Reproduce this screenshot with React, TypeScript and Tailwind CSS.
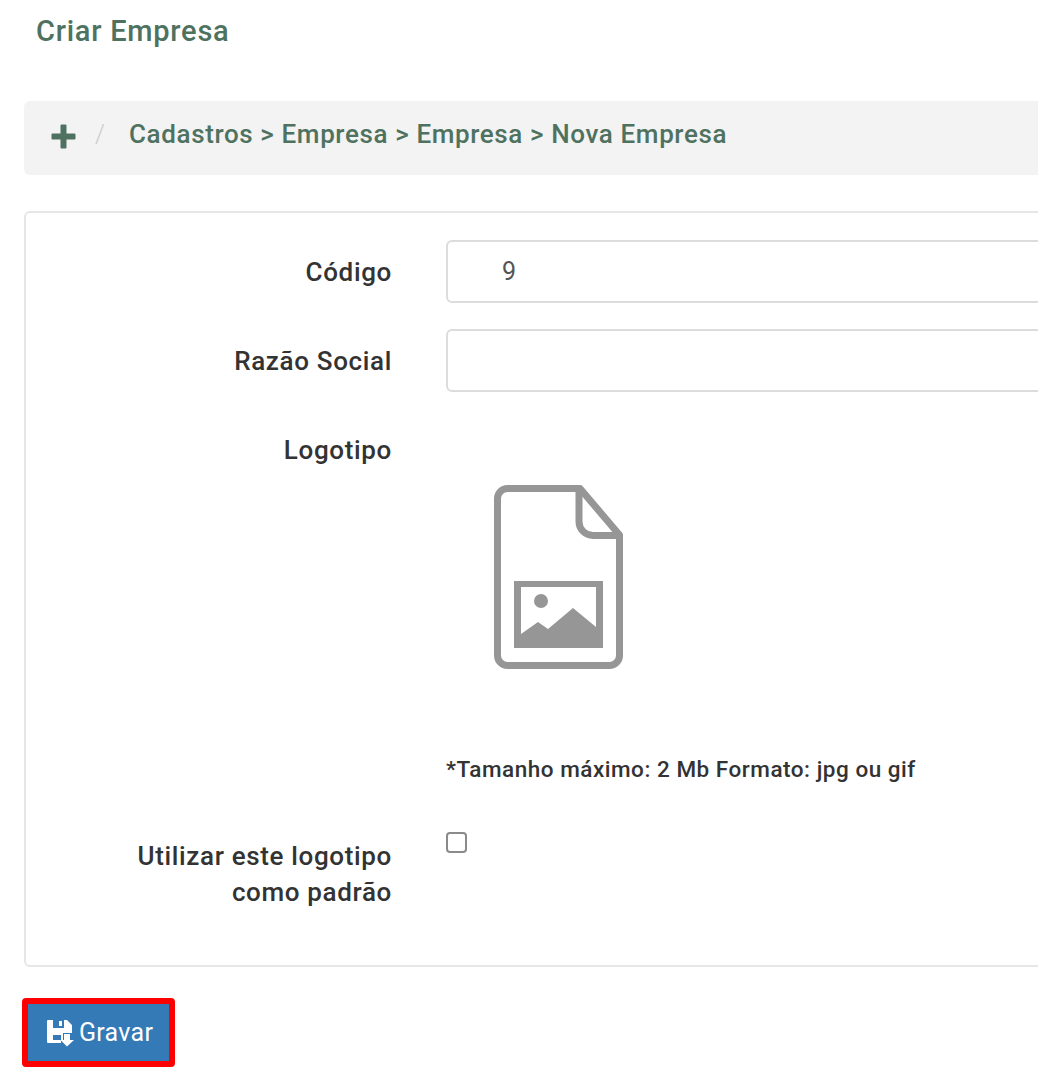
export default function App() {
  const label = "w-[366px] text-right text-[26px] font-medium leading-[36px] tracking-[0.65px] text-[#333]";
  const input = "h-[63px] flex-1 rounded-[6px] border-2 border-[#dcdcdc] bg-white";
  return (
    <div className="h-[1079px] w-[1038px] overflow-hidden bg-white font-['Roboto',sans-serif]">
      <div className="w-[1100px] pl-6">
        <h1 className="pl-3 pt-[12px] text-[29px] font-medium leading-[38px] tracking-[0.75px] text-[#4f7260]">Criar Empresa</h1>
        <nav className="mt-[51px] flex h-[74px] items-center rounded-[6px] bg-[#f3f3f3] pl-[27px] text-[#4f7260]">
          <svg width="25" height="25" viewBox="0 0 25 25" fill="#4f7260" className="mb-[3px] shrink-0">
            <path d="M9.5 1.5a1 1 0 0 1 1-1h4a1 1 0 0 1 1 1v8h8a1 1 0 0 1 1 1v4a1 1 0 0 1-1 1h-8v8a1 1 0 0 1-1 1h-4a1 1 0 0 1-1-1v-8h-8a1 1 0 0 1-1-1v-4a1 1 0 0 1 1-1h8z" />
          </svg>
          <span className="mb-[6px] ml-[19px] w-[34px] text-[25px] font-light text-[#ccc]">/</span>
          <span className="mb-[8px] text-[26px] font-medium leading-[36px] tracking-[0.62px]">Cadastros &gt; Empresa &gt; Empresa &gt; Nova Empresa</span>
        </nav>
        <section className="mt-[36px] h-[756px] rounded-[6px] border-2 border-[#e6e6e6] bg-white pt-[27px]">
          <div className="flex items-center">
            <div className={label}>Código</div>
            <div className={`ml-[54px] flex items-center pl-[54px] text-[25px] text-[#555] ${input}`}>9</div>
          </div>
          <div className="mt-[26px] flex items-center">
            <div className={label}>Razão Social</div>
            <div className={`ml-[54px] ${input}`} />
          </div>
          <div className="mt-[40px] flex items-start">
            <div className={label}>Logotipo</div>
            <div className="ml-[54px] flex-1">
              <svg width="129" height="184" viewBox="0 0 129 184" className="ml-[48px] mt-[53px] block">
                <path d="M13.5 3.5H86L125.5 50V170.5a10 10 0 0 1-10 10H13.500a10 10 0 0 1-10-10V13.5a10 10 0 0 1 10-10z" fill="none" stroke="#969696" strokeWidth="7" strokeLinejoin="round" />
                <path d="M85 3.5v33a14 14 0 0 0 14 14h26.5" fill="none" stroke="#969696" strokeWidth="7" />
                <path fillRule="evenodd" d="M20 96h89v67H20zM27 102v47l17-12 10 7 25-21 23 19v-40z" fill="#969696" />
                <circle cx="47" cy="116" r="7" fill="#969696" />
              </svg>
              <p className="mt-[85px] text-[22.5px] font-medium leading-[30px] tracking-[0.52px] text-[#333]">*Tamanho máximo: 2 Mb Formato: jpg ou gif</p>
            </div>
          </div>
          <div className="mt-[54px] flex items-start">
            <div className={label}>Utilizar este logotipo<br />como padrão</div>
            <div className="ml-[54px] mt-[-6px] h-[21px] w-[21px] rounded-[4px] border-2 border-[#8a8a8a] bg-white" />
          </div>
        </section>
        <div className="mt-[31px] ml-[-2px] inline-flex h-[69px] w-[153px] items-center gap-[5px] rounded-[4px] border-[6px] border-[#ff0000] bg-[#337ab7] pl-[19px] pt-[1px] text-[25px] tracking-[0.3px] text-white">
          <svg width="27" height="27" viewBox="0 0 27 27" fill="#ffffff" className="shrink-0">
            <path fillRule="evenodd" d="M1 0H6V8H17V0H20L25 5V13H16V20H14V15H6V23H1a1 1 0 0 1-1-1V1a1 1 0 0 1 1-1zM12 1h3v5h-3z" />
            <path d="M12 1h3v5h-3zM6 23h8v-3h-8zM17 14h6v6h4l-7 6.500L13.500 20H17z" />
          </svg>
          <span>Gravar</span>
        </div>
      </div>
    </div>
  );
}
